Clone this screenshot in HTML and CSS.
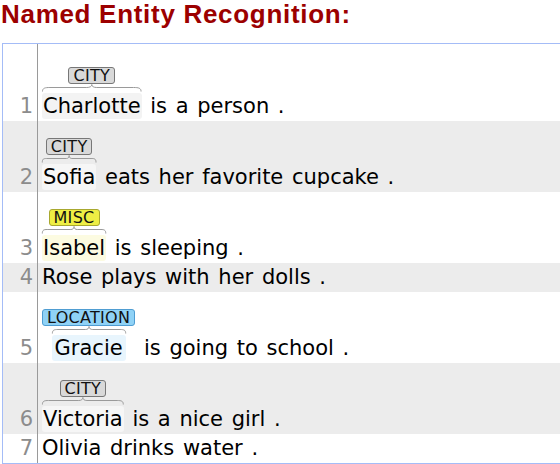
FILE: index.html
```html
<!DOCTYPE html>
<html>
<head>
<meta charset="utf-8">
<link rel="stylesheet" href="styles.css">
</head>
<body>
<h1 class="title">Named Entity Recognition:</h1>
<div class="doc">
  <div class="row row-ann row-first">
    <div class="num">1</div>
    <div class="txt"><span class="ent ent-city"><span class="lab">CITY</span><span class="tok"><svg class="brace" viewBox="0 0 100 8" preserveAspectRatio="none"><path d="M0.5 7.5 C0.5 4 3 3.5 8 3.5 L45 3.5 C48 3.5 50 2.5 50 0.5 C50 2.5 52 3.5 55 3.5 L92 3.5 C97 3.5 99.5 4 99.5 7.5"/></svg><span class="word">Charlotte</span></span></span> is a person .</div>
  </div>
  <div class="row row-ann row-alt">
    <div class="num">2</div>
    <div class="txt"><span class="ent ent-city"><span class="lab">CITY</span><span class="tok"><svg class="brace" viewBox="0 0 100 8" preserveAspectRatio="none"><path d="M0.5 7.5 C0.5 4 3 3.5 8 3.5 L45 3.5 C48 3.5 50 2.5 50 0.5 C50 2.5 52 3.5 55 3.5 L92 3.5 C97 3.5 99.5 4 99.5 7.5"/></svg><span class="word">Sofia</span></span></span> eats her favorite cupcake .</div>
  </div>
  <div class="row row-ann">
    <div class="num">3</div>
    <div class="txt"><span class="ent ent-misc"><span class="lab">MISC</span><span class="tok"><svg class="brace" viewBox="0 0 100 8" preserveAspectRatio="none"><path d="M0.5 7.5 C0.5 4 3 3.5 8 3.5 L45 3.5 C48 3.5 50 2.5 50 0.5 C50 2.5 52 3.5 55 3.5 L92 3.5 C97 3.5 99.5 4 99.5 7.5"/></svg><span class="word">Isabel</span></span></span> is sleeping .</div>
  </div>
  <div class="row row-alt">
    <div class="num">4</div>
    <div class="txt">Rose plays with her dolls .</div>
  </div>
  <div class="row row-ann">
    <div class="num">5</div>
    <div class="txt"><span class="ent ent-loc"><span class="lab">LOCATION</span><span class="tok"><svg class="brace" viewBox="0 0 100 8" preserveAspectRatio="none"><path d="M0.5 7.5 C0.5 4 3 3.5 8 3.5 L45 3.5 C48 3.5 50 2.5 50 0.5 C50 2.5 52 3.5 55 3.5 L92 3.5 C97 3.5 99.5 4 99.5 7.5"/></svg><span class="word">Gracie</span></span></span> is going to school .</div>
  </div>
  <div class="row row-ann row-alt">
    <div class="num">6</div>
    <div class="txt"><span class="ent ent-city"><span class="lab">CITY</span><span class="tok"><svg class="brace" viewBox="0 0 100 8" preserveAspectRatio="none"><path d="M0.5 7.5 C0.5 4 3 3.5 8 3.5 L45 3.5 C48 3.5 50 2.5 50 0.5 C50 2.5 52 3.5 55 3.5 L92 3.5 C97 3.5 99.5 4 99.5 7.5"/></svg><span class="word">Victoria</span></span></span> is a nice girl .</div>
  </div>
  <div class="row">
    <div class="num">7</div>
    <div class="txt">Olivia drinks water .</div>
  </div>
</div>
</body>
</html>
```

FILE: styles.css
```css
html, body {
  margin: 0;
  padding: 0;
  overflow: hidden;
  background: #ffffff;
}

.title {
  margin: 0 0 14px 1px;
  font-family: "Liberation Sans", Arial, sans-serif;
  font-weight: bold;
  font-size: 26px;
  line-height: 29px;
  letter-spacing: 0.7px;
  color: #9c0000;
}

.doc {
  margin-left: 2px;
  margin-right: -20px;
  border: 1px solid #a4bcf7;
  border-right: none;
  font-family: "DejaVu Sans", Verdana, sans-serif;
  font-size: 21px;
  line-height: 29px;
  word-spacing: 2px;
  color: #000000;
}

.row {
  display: flex;
  background: #ffffff;
}

.row-alt {
  background: #ececec;
}

.row-ann {
  padding-top: 17px;
}

.row-first {
  padding-top: 23px;
}

.num {
  flex: none;
  width: 30px;
  padding-right: 4px;
  margin-top: -17px;
  display: flex;
  align-items: flex-end;
  justify-content: flex-end;
  border-right: 1px solid #9a9a9a;
  color: #8c8c8c;
}

.row:not(.row-ann) .num {
  margin-top: 0;
}

.row-first .num {
  margin-top: -23px;
}

.txt {
  padding-left: 4px;
  white-space: nowrap;
}

.ent {
  display: inline-block;
  text-align: center;
  vertical-align: baseline;
  word-spacing: 0;
}

.lab {
  display: block;
  width: fit-content;
  margin: 0 auto;
  padding: 0 4px;
  font-size: 16px;
  line-height: 15px;
  letter-spacing: 0.3px;
  border: 1px solid #7a7a7a;
  border-radius: 3px;
  color: #111111;
}

.tok {
  display: inline-block;
  position: relative;
  padding-top: 8px;
}

.brace {
  position: absolute;
  left: 0;
  top: 0;
  width: 100%;
  height: 8px;
  overflow: visible;
}

.brace path {
  fill: none;
  stroke: #9a9a9a;
  stroke-width: 1px;
  vector-effect: non-scaling-stroke;
}

.word {
  padding: 1px 1px;
  border-radius: 3px;
}

.ent-city .lab {
  background: #d9d9d9;
  border-color: #777777;
}

.ent-city .word {
  background: #f3f3f3;
}

.row-alt .ent-city .word {
  background: #f6f6f6;
}

.ent-misc .lab {
  background: #eeee44;
  border-color: #a8a830;
}

.ent-misc .word {
  background: #fcfbe1;
}

.ent-loc .lab {
  background: #8fd2f6;
  border-color: #4f9dd2;
}

.ent-loc .word {
  background: #e8f5fd;
  padding: 1px 3px;
}
```
